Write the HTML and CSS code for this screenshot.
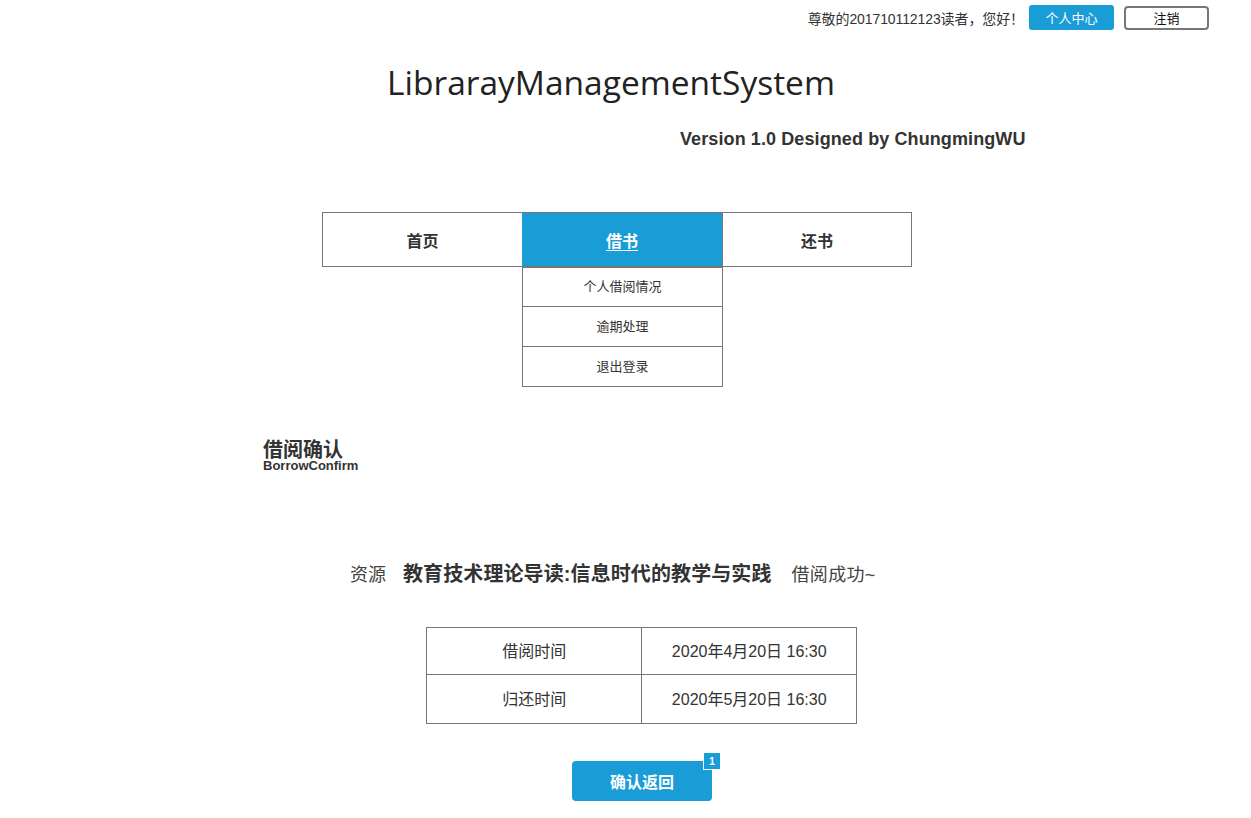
FILE: index.html
```html
<!DOCTYPE html>
<html lang="zh-CN">
<head>
<meta charset="utf-8">
<title>LibrarayManagementSystem</title>
<link rel="stylesheet" href="styles.css">
</head>
<body>
<div class="topbar">
  <span class="greet">尊敬的201710112123读者，您好！</span>
  <a class="btn-center">个人中心</a>
  <a class="btn-logout">注销</a>
</div>
<header class="header">
  <h1 class="title">LibrarayManagementSystem</h1>
  <div class="version">Version 1.0 Designed by ChungmingWU</div>
</header>
<nav class="nav">
  <div class="nav-item first">首页</div>
  <div class="nav-item active"><span class="nav-link">借书</span>
    <ul class="dropdown">
      <li>个人借阅情况</li>
      <li>逾期处理</li>
      <li>退出登录</li>
    </ul>
  </div>
  <div class="nav-item last">还书</div>
</nav>
<section class="section-head">
  <div class="sh-cn">借阅确认</div>
  <div class="sh-en">BorrowConfirm</div>
</section>
<div class="result">
  <span class="res-label">资源</span>
  <span class="res-book">教育技术理论导读:信息时代的教学与实践</span>
  <span class="res-ok">借阅成功~</span>
</div>
<table class="times">
  <tr class="row1"><td class="c1">借阅时间</td><td>2020年4月20日 16:30</td></tr>
  <tr><td class="c1">归还时间</td><td>2020年5月20日 16:30</td></tr>
</table>
<div class="confirm-wrap">
  <a class="confirm">确认返回<span class="badge">1</span></a>
</div>
</body>
</html>
```
FILE: styles.css
```css
* { box-sizing: border-box; }
html, body { margin: 0; padding: 0; background: #fff; }
body {
  font-family: "Liberation Sans", "Noto Sans CJK SC", sans-serif;
  color: #333;
  width: 1251px;
}
.topbar {
  display: flex;
  justify-content: flex-end;
  align-items: center;
  height: 35px;
  padding: 0 42px 0 0;
}
.greet { font-size: 14px; color: #333; margin-right: 5px; letter-spacing: -0.1px; }
.btn-center {
  display: inline-flex; align-items: center; justify-content: center;
  width: 85px; height: 25px; background: #1a9cd6; color: #fff;
  font-size: 13px; border-radius: 3px; margin-right: 10px;
}
.btn-logout {
  display: inline-flex; align-items: center; justify-content: center;
  width: 85px; height: 24px; border: 2px solid #777; color: #111;
  font-size: 13px; border-radius: 4px;
}
.header { height: 140px; }
.title {
  margin: 0; padding: 24px 0 0 387px;
  font-family: "Open Sans", sans-serif; font-weight: 400;
  font-size: 33.5px; line-height: 46px; color: #222;
}
.version {
  margin: 24px 0 0 680px;
  font-weight: bold; font-size: 18px; color: #333; letter-spacing: 0.1px;
}
.nav {
  display: flex; margin: 37px 0 0 322px; width: 590px; height: 55px;
  border: 1px solid #777;
}
.nav-item {
  position: relative;
  width: 200px; display: flex; align-items: center; justify-content: center;
  font-weight: bold; font-size: 16px; color: #333;
}
.nav-item.first { width: 199px; }
.nav-item.last { width: 189px; border-left: 1px solid #777; }
.nav-item.active { background: #1a9cd6; color: #fff; }
.nav-link { text-decoration: underline; text-underline-offset: 3px; }
.dropdown {
  position: absolute; left: 0; top: 53px; width: 201px;
  list-style: none; margin: 0; padding: 0;
  border: 1px solid #777; border-top: 2px solid #777; background: #fff;
}
.dropdown li {
  height: 40px; display: flex; align-items: center; justify-content: center;
  font-size: 13px; font-weight: normal; color: #333;
  border-top: 1px solid #777; padding-bottom: 3px;
}
.dropdown li:first-child { border-top: none; height: 38px; }
.section-head { margin: 172px 0 0 263px; }
.sh-cn { font-size: 20px; font-weight: bold; line-height: 22px; color: #333; }
.sh-en { font-size: 13px; font-weight: bold; line-height: 14px; color: #333; margin-top: -2px; }
.result {
  margin: 85px 0 0 350px; display: flex; align-items: baseline; height: 30px;
}
.res-label { font-size: 18px; color: #444; }
.res-book { font-size: 20px; font-weight: bold; margin-left: 17px; color: #333; letter-spacing: 0.1px; }
.res-ok { font-size: 18px; margin-left: 20px; color: #444; letter-spacing: 0.3px; }
.times {
  margin: 39px 0 0 426px; border-collapse: collapse; width: 431px;
}
.times td {
  border: 1px solid #777; height: 49px; text-align: center; font-size: 16px; color: #333;
  width: 215px; padding: 0 0 2px;
}
.times .row1 td { height: 47px; }
.times td.c1 { width: 216px; }
.confirm-wrap { margin: 37px 0 0 572px; }
.confirm {
  position: relative; display: inline-flex; align-items: center; justify-content: center;
  width: 140px; height: 40px; background: #1a9cd6; color: #fff;
  font-weight: bold; font-size: 16px; border-radius: 4px;
}
.badge {
  position: absolute; right: -9px; top: -9px;
  width: 18px; height: 18px; background: #1a9cd6; color: #fff;
  border: 1px solid #fff; font-size: 10px; font-weight: bold;
  display: flex; align-items: center; justify-content: center;
}
```
